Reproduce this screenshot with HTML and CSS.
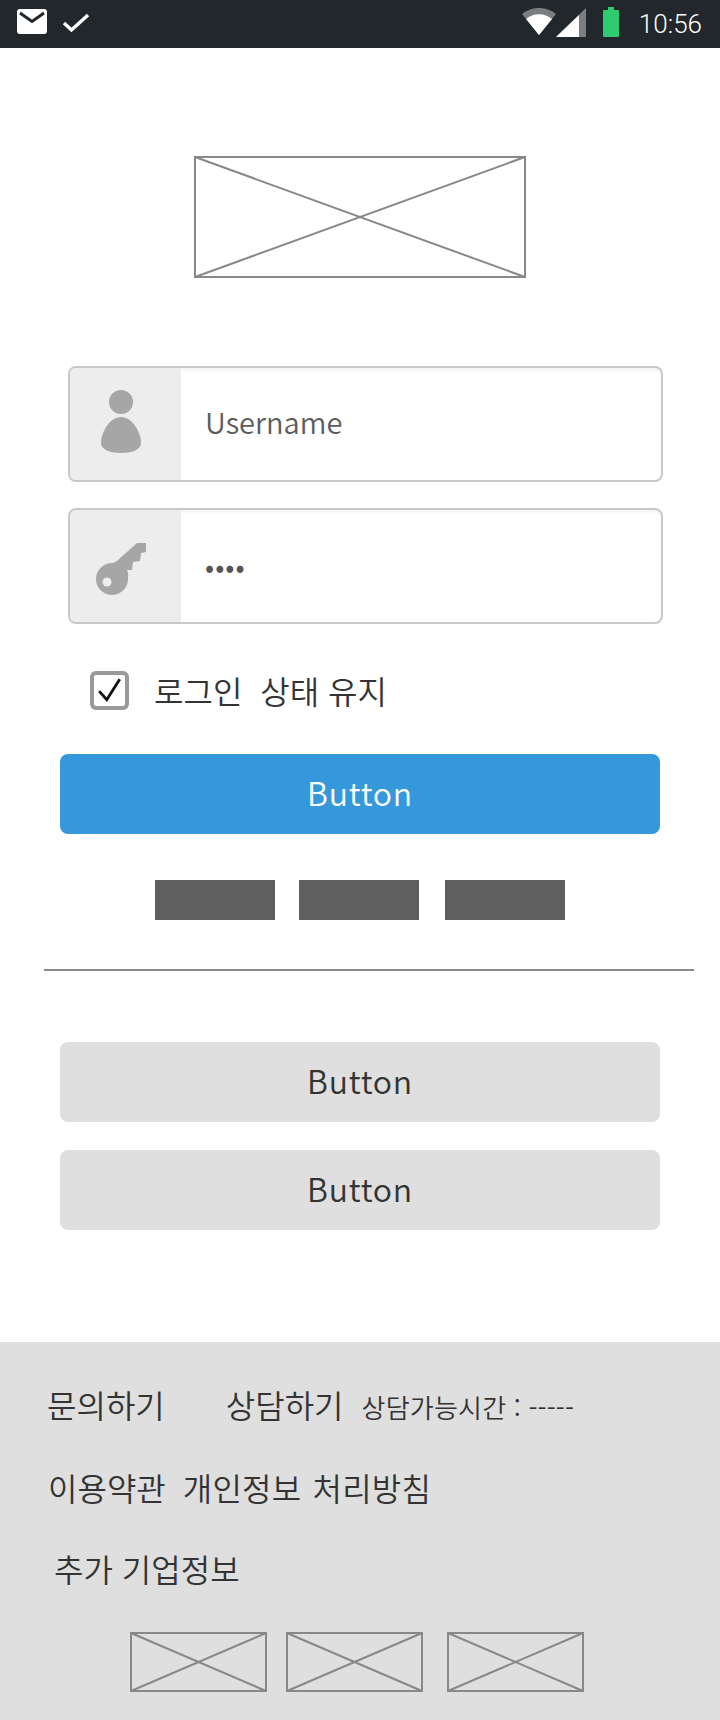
FILE: index.html
```html
<!DOCTYPE html>
<html lang="ko">
<head>
<meta charset="utf-8">
<title>Login</title>
<link rel="stylesheet" href="styles.css">
</head>
<body>
<div class="status">
  <div class="status-left">
    <svg class="ic-mail" viewBox="0 0 30 25" width="30" height="25"><rect width="30" height="25" rx="3" fill="#fff"/><path d="M3 4 L15 12.5 L27 4" fill="none" stroke="#22272b" stroke-width="3"/></svg>
    <svg class="ic-check" viewBox="0 0 28 20" width="28" height="20"><path d="M2 10 L9.5 17 L26 2" fill="none" stroke="#fff" stroke-width="3.4"/></svg>
  </div>
  <div class="status-right">
    <svg class="ic-wifi" viewBox="0 0 34 27" width="34" height="27"><path d="M0 6 A27 27 0 0 1 34 6 L17 27 Z" fill="#7b7e80"/><path d="M4 11 A20 20 0 0 1 30 11 L17 27 Z" fill="#fff"/></svg>
    <svg class="ic-signal" viewBox="0 0 30 29" width="30" height="29"><path d="M30 0 V29 H0 Z" fill="#7b7e80"/><path d="M23 7 V29 H0 Z" fill="#fff"/></svg>
    <svg class="ic-batt" viewBox="0 0 16 30" width="16" height="30"><path d="M5 0 H11 V3 H15 Q16 3 16 4 V29 Q16 30 15 30 H1 Q0 30 0 29 V4 Q0 3 1 3 H5 Z" fill="#2ecc71"/></svg>
    <span class="time">10:56</span>
  </div>
</div>
<main class="login">
  <svg class="ph ph-logo" viewBox="0 0 332 122" preserveAspectRatio="none"><rect x="1" y="1" width="330" height="120" fill="none" stroke="#888" stroke-width="2"/><path d="M1 1 L331 121 M331 1 L1 121" stroke="#888" stroke-width="2"/></svg>
  <div class="fields">
    <div class="field">
      <div class="field-icon icon-user">
        <svg viewBox="0 0 40 64" width="40" height="64"><circle cx="20" cy="12" r="12" fill="#a6a6a6"/><path d="M20 27 C31 27 40 42 40 53 C40 60 30 63 20 63 C10 63 0 60 0 53 C0 42 9 27 20 27 Z" fill="#a6a6a6"/></svg>
      </div>
      <div class="field-text">Username</div>
    </div>
    <div class="field">
      <div class="field-icon icon-key">
        <svg viewBox="0 0 50 53" width="50" height="53"><path d="M22 18 L41 1 H50 V10 L45 11 L44 19 L37 20 L36 28 L31 28 C33 31 32 37 32 37 A16 16 0 1 1 16 21 C18 21 20 20 22 18 Z" fill="#a6a6a6"/><circle cx="11" cy="40" r="4.5" fill="#ededed"/></svg>
      </div>
      <div class="field-text field-dots">••••</div>
    </div>
  </div>
  <label class="keep">
    <span class="checkbox"><svg viewBox="0 0 24 24" width="26" height="26"><path d="M2 13 L9 21 L21 2" fill="none" stroke="#111" stroke-width="2.6"/></svg></span>
    <span class="keep-text">로그인&nbsp; 상태 유지</span>
  </label>
  <button class="btn btn-primary">Button</button>
  <div class="links">
    <span class="block"></span><span class="block block-mid"></span><span class="block"></span>
  </div>
  <hr class="divider">
  <div class="alt-buttons">
    <button class="btn btn-gray">Button</button>
    <button class="btn btn-gray">Button</button>
  </div>
</main>
<footer class="footer">
  <div class="row row-1"><span class="f-link">문의하기</span><span class="f-link f-consult">상담하기</span><span class="f-small">상담가능시간 : -----</span></div>
  <div class="row row-2"><span class="f-link">이용약관</span><span class="f-link f-privacy">개인정보 처리방침</span></div>
  <div class="row row-3"><span class="f-link">추가 기업정보</span></div>
  <div class="thumbs">
    <svg class="ph ph-thumb" viewBox="0 0 137 60" preserveAspectRatio="none"><rect x="1" y="1" width="135" height="58" fill="none" stroke="#888" stroke-width="2"/><path d="M1 1 L136 59 M136 1 L1 59" stroke="#888" stroke-width="2"/></svg>
    <svg class="ph ph-thumb" viewBox="0 0 137 60" preserveAspectRatio="none"><rect x="1" y="1" width="135" height="58" fill="none" stroke="#888" stroke-width="2"/><path d="M1 1 L136 59 M136 1 L1 59" stroke="#888" stroke-width="2"/></svg>
    <svg class="ph ph-thumb" viewBox="0 0 137 60" preserveAspectRatio="none"><rect x="1" y="1" width="135" height="58" fill="none" stroke="#888" stroke-width="2"/><path d="M1 1 L136 59 M136 1 L1 59" stroke="#888" stroke-width="2"/></svg>
  </div>
</footer>
</body>
</html>
```
FILE: styles.css
```css
* { box-sizing: border-box; }
html, body { margin: 0; padding: 0; }
body {
  width: 720px;
  height: 1720px;
  overflow: hidden;
  background: #fff;
  font-family: "Noto Sans CJK KR", "Noto Sans", sans-serif;
  font-weight: 350;
  display: flex;
  flex-direction: column;
}
.status {
  height: 48px;
  background: #22272b;
  display: flex;
  justify-content: space-between;
  align-items: center;
  padding: 0 18px 0 17px;
  flex: none;
}
.status-left, .status-right { display: flex; align-items: center; }
.ic-mail { margin-top: -5px; }
.ic-check { margin-left: 15px; margin-top: -3px; }
.ic-wifi { margin-top: -5px; }
.ic-signal { margin-top: -3px; }
.ic-batt { margin-left: 17px; margin-top: -4px; }
.time {
  font-family: "Roboto", sans-serif;
  font-weight: 300;
  font-size: 26px;
  color: #fff;
  margin-left: 20px;
}
.login { flex: 1; display: flex; flex-direction: column; align-items: center; }
.ph { display: block; }
.ph-logo { width: 332px; height: 122px; margin-top: 108px; }
.fields { margin: 88px 0 0 68px; align-self: flex-start; display: flex; flex-direction: column; gap: 26px; width: 595px; }
.field {
  height: 116px;
  border: 2px solid #c8c8c8;
  border-radius: 8px;
  display: flex;
  align-items: center;
  overflow: hidden;
  box-shadow: inset 0 2px 3px rgba(0,0,0,.05);
}
.field-icon {
  width: 111px;
  height: 100%;
  background: #ededed;
  display: flex;
  align-items: center;
  flex: none;
}
.icon-user { padding: 0 0 5px 31px; }
.icon-key { padding: 5px 0 0 26px; }
.field-text { font-size: 29px; color: #5c5c5c; padding: 0 0 6px 24px; }
.field-dots { font-size: 27px; color: #555; line-height: 1; padding-bottom: 2px; font-weight: 400; letter-spacing: 1px; }
.keep { display: flex; align-items: center; align-self: flex-start; margin: 46px 0 0 90px; }
.checkbox {
  width: 39px; height: 39px;
  border: 4px solid #999;
  border-radius: 6px;
  display: flex; align-items: center; justify-content: center;
}
.keep-text { font-size: 32px; color: #333; margin-left: 25px; line-height: 40px; }
.btn {
  display: block;
  width: 600px;
  height: 80px;
  border: 0;
  border-radius: 8px;
  font-family: inherit;
  font-weight: 350;
  font-size: 32px;
  letter-spacing: .8px;
  padding: 0 0 5px;
}
.btn-primary { background: #3498db; color: #fff; margin-top: 44px; }
.links { display: flex; margin-top: 46px; }
.block { width: 120px; height: 40px; background: #5f5f5f; }
.block-mid { margin: 0 26px 0 24px; }
.divider { align-self: flex-start; width: 650px; border: 0; border-top: 2px solid #8a8a8a; margin: 49px 0 0 44px; }
.alt-buttons { display: flex; flex-direction: column; gap: 28px; margin-top: 71px; }
.btn-gray { background: #dfdfdf; color: #333; }
.footer {
  height: 378px;
  flex: none;
  background: #dfdfdf;
  padding-top: 39px;
  color: #333;
  display: flex;
  flex-direction: column;
}
.row { display: flex; align-items: baseline; }
.f-link { font-size: 32px; line-height: 46px; white-space: nowrap; }
.f-small { font-size: 26px; margin-left: 18px; white-space: nowrap; letter-spacing: .2px; }
.row-1 { padding-left: 47px; }
.f-consult { margin-left: 61px; }
.row-2 { padding-left: 48px; margin-top: 37px; }
.f-privacy { margin-left: 17px; word-spacing: 2px; letter-spacing: .2px; }
.row-3 { padding-left: 54px; margin-top: 35px; }
.thumbs { display: flex; margin: 41px 0 0 130px; gap: 19px; }
.ph-thumb { width: 137px; height: 60px; }
.ph-thumb:last-child { margin-left: 5px; }
```
